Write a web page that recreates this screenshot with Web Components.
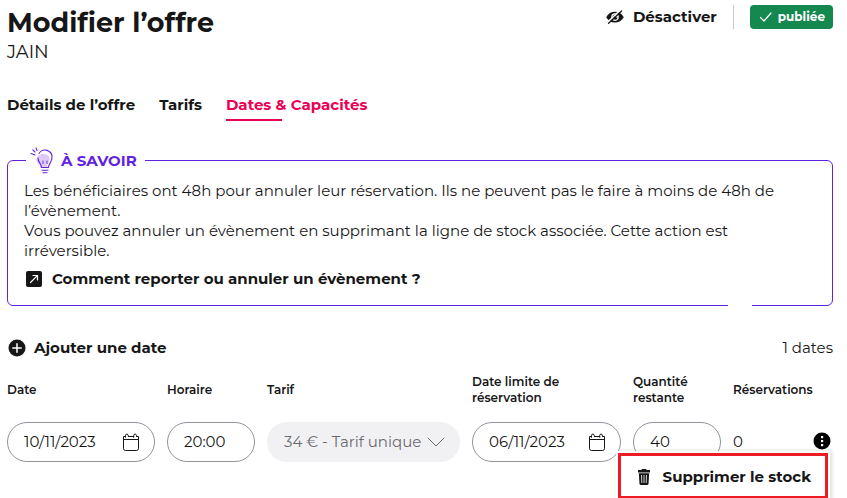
<!DOCTYPE html>
<html lang="fr">
<head>
<meta charset="utf-8">
<meta name="viewport" content="width=device-width, initial-scale=1">
<title>Modifier l’offre</title>
<style>
  :root {
    --ink: #161617;
    --pink: #eb0055;
    --violet: #6123df;
    --green: #15884f;
    --line: #90949d;
  }
  body {
    margin: 0;
    min-height: 100vh;
    background: #fff;
    color: var(--ink);
    font-family: Montserrat, Inter, "Open Sans", sans-serif;
    font-size: 15px;
    line-height: 20px;
  }
</style>
</head>
<body>
<offer-page></offer-page>

<script>
const base = `
  *, *::before, *::after { box-sizing: border-box; }
  button, input, select { font: inherit; color: inherit; margin: 0; padding: 0; border: 0; background: none; }
  button { cursor: pointer; }
  svg { display: block; }
`;

const icons = {
  hide: `<svg viewBox="0 0 20 20" width="20" height="20" fill="none"><path d="M1.200 10.200C3.200 6.500 6.400 4.800 10 4.800s6.800 1.700 8.800 5.400c-2 3.500-5.200 5.200-8.800 5.200s-6.800-1.700-8.800-5.200z" fill="#161617"/><circle cx="10" cy="10.100" r="3.800" fill="#fff"/><path d="M10.300 7.500a2.600 2.600 0 1 0 2.300 2.900 2 2 0 0 1-2.300-2.900z" fill="#161617"/><path d="M3 14.800 15.400 3" stroke="#fff" stroke-width="1.600"/><path d="M3.600 16.300 16.600 4" stroke="#161617" stroke-width="1.300" stroke-linecap="round"/></svg>`,
  check: `<svg viewBox="0 0 14 12" width="14" height="12" fill="none" stroke="#fff" stroke-width="1.200" stroke-linecap="round" stroke-linejoin="round"><path d="m1.500 6.500 3.500 3.500L12 2"/></svg>`,
  bulb: `<svg viewBox="0 0 26 28" width="26" height="28" fill="none" stroke="#6123df" stroke-width="1.100" stroke-linecap="round"><path d="M6.500 11c2-5 9-6 12.500-1.500 2 4-1.500 6-2 11h-6.500C10 17 5 16 6.500 11z" fill="#dccbfa" stroke="none"/><path d="M11.500 20.500C11.500 16.500 8 15.500 8 11M9 6.500A7 7 0 0 1 22 10.500c0 5-3.500 6-3.500 10h-7"/><path d="M13 14v2.500M17 14v2.500" stroke-width=".9"/><path d="M12 23.200h6M13 25.800h4M1 6.500l4 1.500M2.800 2.800 5 5M6 1l1 2.500"/></svg>`,
  link: `<svg viewBox="0 0 16 16" width="16" height="16" fill="none"><rect width="16" height="16" rx="2" fill="#161617"/><path d="M4.500 11.500 11.300 4.700M7 4.500h4.500V9" stroke="#fff" stroke-width="1.200" stroke-linecap="round" stroke-linejoin="round"/></svg>`,
  plus: `<svg viewBox="0 0 18 18" width="18" height="18"><circle cx="9" cy="9" r="8.500" fill="#161617"/><path d="M9 4.800v8.400M4.800 9h8.400" stroke="#fff" stroke-width="1.500" stroke-linecap="round"/></svg>`,
  calendar: `<svg viewBox="0 0 18 19" width="18" height="19" fill="none" stroke="#161617" stroke-width="1" stroke-linecap="round"><path d="M3.500 3.500H1.500v12a2 2 0 0 0 2 2h11a2 2 0 0 0 2-2v-12h-2M6.300 3.500h5.400M1.500 6.500h15"/><path d="M3.500 4.300V2.500a1.400 1.400 0 0 1 2.800 0M11.700 4.300V2.500a1.400 1.400 0 0 1 2.800 0"/></svg>`,
  chevron: `<svg viewBox="0 0 18 10" width="18" height="10" fill="none" stroke="#696a6f" stroke-width="1" stroke-linecap="round" stroke-linejoin="round"><path d="m1 1 8 8 8-8"/></svg>`,
  more: `<svg viewBox="0 0 18 18" width="18" height="18"><circle cx="9" cy="9" r="8.500" fill="#000"/><g fill="#fff"><rect x="8" y="4" width="2.200" height="2.200"/><rect x="8" y="8" width="2.200" height="2.200"/><rect x="8" y="12" width="2.200" height="2.200"/></g></svg>`,
  trash: `<svg viewBox="0 0 14 18" width="14" height="18" fill="#161617"><path d="M4.500 1.700Q4.500 1 5.200 1h3.600q.700 0 .700.700V2H13v2.500H1V2h3.500z"/><path d="M1.800 5.300h10.400l-.700 10.500q-.1 1.200-1.300 1.200H3.800q-1.200 0-1.300-1.200z"/><path d="m4.500 7 .3 8M7 7v8M9.500 7l-.3 8" stroke="#fff" stroke-width=".8"/></svg>`
};

function define(name, css, html) {
  customElements.define(name, class extends HTMLElement {
    constructor() {
      super();
      const t = document.createElement('template');
      t.innerHTML = `<style>${base}${css}</style>${html}`;
      this.attachShadow({ mode: 'open' }).append(t.content.cloneNode(true));
    }
    connectedCallback() {
      const slot = this.shadowRoot.querySelector('[data-icon]');
      if (slot) slot.innerHTML = icons[this.getAttribute('icon')] || '';
      const input = this.shadowRoot.querySelector('input');
      if (input) {
        input.value = this.getAttribute('value');
        input.setAttribute('aria-label', this.getAttribute('label'));
        if (this.hasAttribute('calendar')) input.parentNode.insertAdjacentHTML('beforeend',
          `<button type="button" aria-label="Ouvrir le calendrier">${icons.calendar}</button>`);
      }
    }
  });
}

define('icon-button', `
  :host { display: inline-flex; }
  button { display: flex; align-items: center; gap: var(--gap, 8px); font-weight: 700; white-space: nowrap; }
`, `<button type="button"><span data-icon></span><slot></slot></button>`);

define('status-tag', `
  :host { display: inline-flex; align-items: center; gap: 5px; height: 24px; padding: 0 8px 0 9px; border-radius: 4px;
    background: var(--green); color: #fff; font-size: 12px; font-weight: 700; }
`, `${icons.check}<slot></slot>`);

define('offer-header', `
  :host { display: flex; justify-content: space-between; align-items: flex-start; }
  h1 { margin: 0; padding-top: 1px; font-size: 27px; line-height: 34px; font-weight: 700; }
  p { margin: 0; font-size: 18px; line-height: 24px; }
  .actions { display: flex; align-items: center; }
  .sep { width: 1px; height: 24px; margin: 0 16px; background: #c5c6cb; }
`, `<div><h1>Modifier l’offre</h1><p>JAIN</p></div>
  <div class="actions"><icon-button icon="hide">Désactiver</icon-button><span class="sep"></span><status-tag>publiée</status-tag></div>`);

define('offer-tabs', `
  :host { display: block; }
  nav { display: flex; gap: 24px; font-weight: 700; }
  a { color: inherit; text-decoration: none; }
  a[aria-current] { color: var(--pink); }
  a[aria-current]::after { content: ""; display: block; width: 56px; height: 2px; margin-top: 4px; background: currentColor; }
`, `<nav><a href="#details">Détails de l’offre</a><a href="#tarifs">Tarifs</a><a href="#dates" aria-current="page">Dates &amp; Capacités</a></nav>`);

define('info-callout', `
  :host { display: block; position: relative; border: 1px solid var(--violet); border-radius: 6px; padding: 0 16px 16px; }
  :host::after { content: ""; position: absolute; right: 80px; bottom: -1px; width: 24px; height: 1px; background: #fff; }
  h2 { display: flex; align-items: center; gap: 5px; width: max-content; height: 28px; margin: -14px 0 6px 2px; padding: 0 8px 0 4px;
    background: #fff; color: var(--violet); font-size: 15px; font-weight: 700; }
  p { margin: 0; }
  a { display: flex; align-items: center; gap: 10px; margin-top: 8px; padding-left: 2px; color: inherit; text-decoration: none; font-weight: 700; }
`, `<h2>${icons.bulb}À SAVOIR</h2>
  <p>Les bénéficiaires ont 48h pour annuler leur réservation. Ils ne peuvent pas le faire à moins de 48h de l’évènement.</p>
  <p>Vous pouvez annuler un évènement en supprimant la ligne de stock associée. Cette action est irréversible.</p>
  <a href="#aide">${icons.link}Comment reporter ou annuler un évènement ?</a>`);

define('pill-input', `
  :host { display: block; }
  div { display: flex; align-items: center; height: 40px; padding: 0 14px 0 16px; border: 1px solid var(--line); border-radius: 20px; background: #fff; }
  input { flex: 1; min-width: 0; width: 100%; outline: 0; }
`, `<div><input type="text"></div>`);

define('pill-select', `
  :host { display: grid; align-items: center; color: #696a6f; }
  select { grid-area: 1 / 1; width: 100%; height: 40px; padding: 0 17px; border-radius: 20px; background: #f1f1f4; appearance: none; opacity: 1; }
  svg { grid-area: 1 / 1; justify-self: end; margin-right: 15px; pointer-events: none; }
`, `<select disabled aria-label="Tarif"><option>34 € - Tarif unique</option></select>${icons.chevron}`);

define('row-menu', `
  :host { display: block; position: relative; padding-bottom: 3px; }
  button { display: block; }
  .menu { position: absolute; top: 21px; right: 3px; z-index: 1; height: 46px; padding: 2px 14px 0 16px; border: 3px solid #ed1c24; background: #fff;
    display: flex; align-items: center; box-shadow: 0 0 0 2px #fff, 2px 0 4px 2px #0002; }
  .menu icon-button { --gap: 12px; }
`, `<button type="button" aria-label="Actions" aria-expanded="true">${icons.more}</button>
  <div class="menu"><icon-button icon="trash">Supprimer le stock</icon-button></div>`);

define('stock-table', `
  :host { display: block; }
  table { width: 100%; table-layout: fixed; border-collapse: collapse; }
  th, td { padding: 0 12px 0 0; text-align: left; }
  th { height: 32px; font-size: 12px; line-height: 16px; font-weight: 600; }
  td { padding-top: 16px; }
  th:last-child, td:last-child { padding-right: 0; }
  .l { width: 160px; } .m { width: 161px; } .s { width: 100px; }
  .last { display: flex; justify-content: space-between; align-items: center; padding-right: 2px; }
`, `<table><thead><tr><th class="l">Date</th><th class="s">Horaire</th><th>Tarif</th><th class="m">Date limite de réservation</th><th class="s">Quantité restante</th><th class="s">Réservations</th></tr></thead>
  <tbody><tr>
    <td><pill-input value="10/11/2023" label="Date" calendar></pill-input></td>
    <td><pill-input value="20:00" label="Horaire"></pill-input></td>
    <td><pill-select></pill-select></td>
    <td><pill-input value="06/11/2023" label="Date limite de réservation" calendar></pill-input></td>
    <td><pill-input value="40" label="Quantité restante"></pill-input></td>
    <td><div class="last"><span>0</span><row-menu></row-menu></div></td>
  </tr></tbody></table>`);

define('offer-page', `
  :host { display: block; padding: 5px 14px 0 7px; }
  offer-tabs { margin-top: 31px; }
  info-callout { margin-top: 39px; }
  .bar { display: flex; justify-content: space-between; align-items: center; margin: 32px 0 16px; padding-left: 1px; }
`, `<offer-header></offer-header><offer-tabs></offer-tabs><info-callout></info-callout>
  <div class="bar"><icon-button icon="plus">Ajouter une date</icon-button><span>1 dates</span></div>
  <stock-table></stock-table>`);
</script>
</body>
</html>
